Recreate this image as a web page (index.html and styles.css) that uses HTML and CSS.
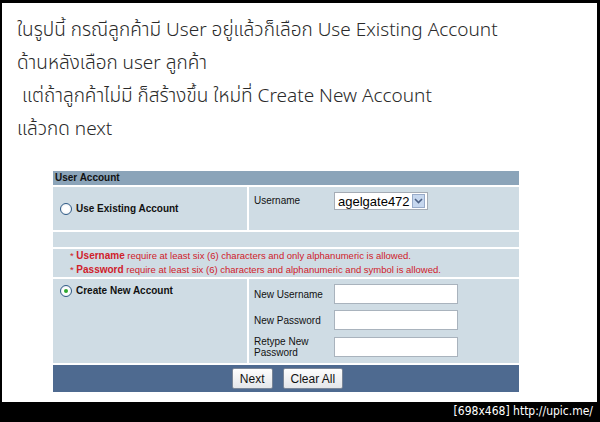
FILE: index.html
```html
<!DOCTYPE html>
<html lang="th">
<head>
    <meta charset="UTF-8">
    <title>User Account</title>
    <link rel="stylesheet" href="styles.css">
</head>
<body>
    <div class="frame">
        <div class="sheet">
            <!-- note above the screenshot -->
            <div class="note">
                <p>ในรูปนี้ กรณีลูกค้ามี User อยู่แล้วก็เลือก Use Existing Account</p>
                <p>ด้านหลังเลือก user ลูกค้า</p>
                <p class="indent">แต่ถ้าลูกค้าไม่มี ก็สร้างขึ้น ใหม่ที่ Create New Account</p>
                <p>แล้วกด next</p>
            </div>

            <!-- User Account form -->
            <div class="account">
                <div class="account-head">User Account</div>

                <div class="row split">
                    <label class="choice">
                        <input type="radio" name="mode"> Use Existing Account
                    </label>
                    <div class="fields top">
                        <span class="lbl">Username</span>
                        <span class="select">
                            <span class="select-val">agelgate472</span>
                            <span class="select-btn">
                                <svg width="9" height="6" viewBox="0 0 9 6"><path d="M1 1 L4.5 4.5 L8 1" fill="none" stroke="#4d6185" stroke-width="1.6"/></svg>
                            </span>
                        </span>
                    </div>
                </div>

                <div class="row blank"></div>

                <div class="row rules">
                    <div>* <b>Username</b> require at least six (6) characters and only alphanumeric is allowed.</div>
                    <div>* <b>Password</b> require at least six (6) characters and alphanumeric and symbol is allowed.</div>
                </div>

                <div class="row split">
                    <label class="choice start">
                        <input type="radio" name="mode" checked> Create New Account
                    </label>
                    <div class="fields list">
                        <span class="lbl">New Username</span><input type="text" class="box">
                        <span class="lbl">New Password</span><input type="password" class="box">
                        <span class="lbl">Retype New Password</span><input type="password" class="box">
                    </div>
                </div>

                <div class="account-foot">
                    <button type="button">Next</button>
                    <button type="button">Clear All</button>
                </div>
            </div>
        </div>
        <div class="stamp">[698x468] http://upic.me/</div>
    </div>
</body>
</html>
```

FILE: styles.css
```css
body {
    margin: 0;
    background: #000;
}
.frame {
    width: 600px;
    height: 422px;
    background: #000;
    padding: 3px 3px 0 2px;
    box-sizing: border-box;
    display: flex;
    flex-direction: column;
}
.sheet {
    background: #fff;
    height: 399px;
    padding: 11px 0 0 51px;
    box-sizing: border-box;
}
.note {
    margin-left: -36px;
    font-family: "Noto Sans Thai", "Noto Sans", sans-serif;
    font-size: 19px;
    font-weight: 300;
    color: #2a2a2a;
    line-height: 33px;
}
.note p {
    margin: 0;
}
.note .indent {
    padding-left: 5px;
}

.account {
    margin-top: 25px;
    width: 466px;
    font-family: "Liberation Sans", Arial, sans-serif;
    font-size: 10px;
    color: #111;
    display: flex;
    flex-direction: column;
    gap: 2px;
}
.account-head {
    background: #8ba4b9;
    font-weight: bold;
    height: 14px;
    line-height: 14px;
    padding-left: 2px;
    color: #111;
}
.row {
    background: #cfdce4;
}
.split {
    display: grid;
    grid-template-columns: 194px 1fr;
    column-gap: 2px;
    background: #fff;
}
.split > * {
    background: #cfdce4;
}
.choice {
    display: flex;
    align-items: center;
    gap: 4px;
    padding-left: 7px;
    font-weight: bold;
    font-size: 10px;
}
.choice.start {
    align-items: flex-start;
    padding-top: 6px;
}
/* XP style radio */
.choice input {
    appearance: none;
    margin: 0;
    width: 12px;
    height: 12px;
    border: 1px solid #2f5a86;
    border-radius: 50%;
    background: radial-gradient(circle, #fff 40%, #e2e6ea 100%);
    display: grid;
    place-items: center;
}
.choice input:checked::after {
    content: "";
    width: 4px;
    height: 4px;
    border-radius: 50%;
    background: #2fa82f;
}
.fields {
    padding-left: 5px;
}
.fields.top {
    height: 43px;
    display: flex;
    align-items: flex-start;
    padding-top: 5px;
    box-sizing: border-box;
}
.fields.top .lbl {
    width: 80px;
    line-height: 18px;
}
.select {
    display: flex;
    align-items: center;
    height: 18px;
    width: 94px;
    background: #fff;
    border: 1px solid #a5acb5;
    box-sizing: border-box;
}
.select-val {
    flex: 1;
    font-size: 13px;
    padding-left: 3px;
    color: #000;
}
.select-btn {
    width: 13px;
    height: 14px;
    margin-right: 2px;
    background: #c6d7ee;
    border: 1px solid #98abc9;
    box-sizing: border-box;
    display: flex;
    align-items: center;
    justify-content: center;
}
.blank {
    height: 15px;
}
.rules {
    color: #d0202a;
    font-size: 9.5px;
    line-height: 14px;
    padding: 0 0 0 17px;
}
.rules b {
    font-size: 10px;
}
.list {
    display: grid;
    grid-template-columns: 80px 124px;
    align-items: center;
    row-gap: 6px;
    padding: 5px 0 5px 5px;
}
.box {
    margin: 0;
    height: 20px;
    border: 1px solid #a9b3bd;
    box-sizing: border-box;
    background: #fff;
}
.account-foot {
    background: #4e6a90;
    height: 27px;
    display: flex;
    justify-content: center;
    align-items: center;
    gap: 10px;
    padding-left: 3px;
}
.account-foot button {
    font-family: "Liberation Sans", Arial, sans-serif;
    font-size: 12px;
    height: 21px;
    padding: 0 7px;
    background: linear-gradient(#fdfdfd, #e4e6ea);
    border: 1px solid #7a8698;
    border-radius: 2px;
    color: #111;
}

.stamp {
    flex: 1;
    color: #fff;
    font-family: "DejaVu Sans Condensed", "DejaVu Sans", sans-serif;
    font-size: 12px;
    text-align: right;
    padding-right: 4px;
    line-height: 19px;
}
```
